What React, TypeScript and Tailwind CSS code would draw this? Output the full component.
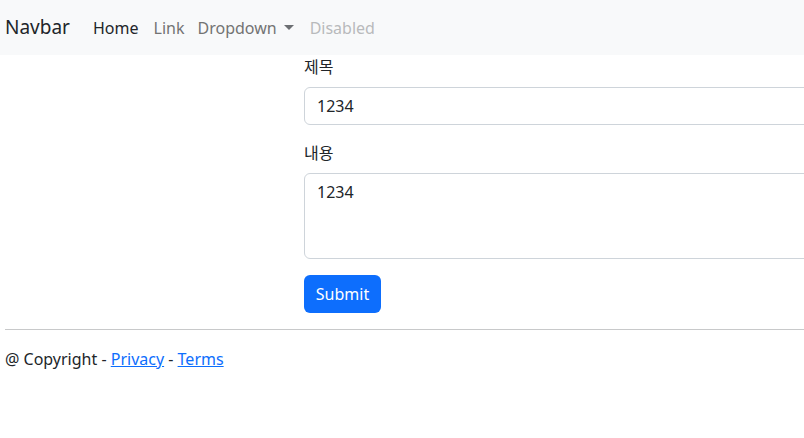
import React from "react";

export default function App() {
  const font = { fontFamily: '"Noto Sans", "Noto Sans CJK KR", sans-serif' };
  return (
    <div className="w-[804px] h-[438px] overflow-hidden bg-white text-[16px] text-[#212529]" style={font}>
      <nav className="h-[55px] bg-[#f8f9fa] flex items-center pl-[5px]">
        <span className="w-[88px] text-[19px] text-[#212529] leading-none">Navbar</span>
        <div className="flex items-center">
          <span className="mr-[15px] text-[#212529]">Home</span>
          <span className="mr-[13px] text-[#737373]">Link</span>
          <span className="mr-[16px] text-[#737373] flex items-center">
            Dropdown
            <span className="ml-[7px] inline-block w-0 h-0 border-l-[5px] border-r-[5px] border-t-[5px] border-l-transparent border-r-transparent border-t-[#6c6f72]" />
          </span>
          <span className="text-[#b8babc]">Disabled</span>
        </div>
      </nav>
      <div className="pl-[304px] w-[1000px]">
        <div className="leading-[24px] mb-[8px]">제목</div>
        <div className="h-[38px] border border-[#ced4da] rounded-[6px] px-[12px] flex items-center">1234</div>
        <div className="leading-[24px] mt-[16px] mb-[8px]">내용</div>
        <div className="h-[86px] border border-[#ced4da] rounded-[6px] px-[12px] pt-[6px]">1234</div>
        <button className="mt-[16px] h-[38px] w-[77px] bg-[#0d6efd] text-white rounded-[6px] flex items-center justify-center">Submit</button>
      </div>
      <div className="ml-[5px] mt-[16px] border-t border-[#c8c9ca]" />
      <div className="ml-[5px] mt-[17px] leading-[24px]">
        @ Copyright - <span className="text-[#0d6efd] underline">Privacy</span> - <span className="text-[#0d6efd] underline">Terms</span>
      </div>
    </div>
  );
}
